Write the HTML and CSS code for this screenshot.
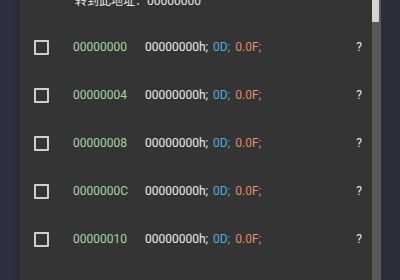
FILE: index.html
```html
<!DOCTYPE html>
<html>
<head>
<meta charset="utf-8">
<link rel="stylesheet" href="styles.css">
</head>
<body>
<div class="screen">
  <div class="side-left"></div>
  <div class="panel">
    <div class="header">转到此地址：00000000</div>
    <div class="row">
      <span class="check"></span>
      <span class="addr">00000000</span>
      <span class="val">00000000h;</span><span class="dec">0D;</span><span class="flt">0.0F;</span>
      <span class="q">?</span>
    </div>
    <div class="row">
      <span class="check"></span>
      <span class="addr">00000004</span>
      <span class="val">00000000h;</span><span class="dec">0D;</span><span class="flt">0.0F;</span>
      <span class="q">?</span>
    </div>
    <div class="row">
      <span class="check"></span>
      <span class="addr">00000008</span>
      <span class="val">00000000h;</span><span class="dec">0D;</span><span class="flt">0.0F;</span>
      <span class="q">?</span>
    </div>
    <div class="row">
      <span class="check"></span>
      <span class="addr">0000000C</span>
      <span class="val">00000000h;</span><span class="dec">0D;</span><span class="flt">0.0F;</span>
      <span class="q">?</span>
    </div>
    <div class="row">
      <span class="check"></span>
      <span class="addr">00000010</span>
      <span class="val">00000000h;</span><span class="dec">0D;</span><span class="flt">0.0F;</span>
      <span class="q">?</span>
    </div>
  </div>
  <div class="scrollbar"><div class="thumb"></div></div>
  <div class="side-right"></div>
</div>
</body>
</html>
```
FILE: styles.css
```css
html, body {
  margin: 0;
  padding: 0;
  background: #2b2e3b;
}
.screen {
  display: flex;
  width: 400px;
  height: 280px;
  overflow: hidden;
  font-family: Roboto, "Noto Sans CJK SC", sans-serif;
  font-size: 12px;
}
.side-left {
  width: 20px;
  flex: none;
  background: linear-gradient(to right, #2d3040 0, #2d3040 14px, #272a35 17px, #2a2c33 20px);
}
.panel {
  flex: none;
  width: 352px;
  background: #343434;
  overflow: hidden;
}
.header {
  margin-top: -6px;
  height: 29px;
  line-height: 14px;
  padding-left: 55px;
  color: #e6e6e6;
  white-space: nowrap;
}
.row {
  height: 48px;
  display: flex;
  align-items: center;
  white-space: nowrap;
}
.check {
  flex: none;
  box-sizing: border-box;
  width: 15px;
  height: 15px;
  margin-left: 14px;
  border: 2px solid #cfcfcf;
  border-radius: 1px;
}
.addr {
  flex: none;
  width: 72px;
  margin-left: 24px;
  color: #a3d8a0;
}
.val {
  color: #ececec;
}
.dec {
  margin-left: 5px;
  color: #46b2de;
}
.flt {
  margin-left: 5px;
  color: #df8e6c;
}
.q {
  margin-left: auto;
  margin-right: 10px;
  color: #e8e8e8;
}
.scrollbar {
  flex: none;
  width: 9px;
  background: #585858;
}
.thumb {
  width: 7px;
  height: 22px;
  background: #d4d4d4;
}
.side-right {
  flex: 1;
  background: #2a2d3a;
}
```
